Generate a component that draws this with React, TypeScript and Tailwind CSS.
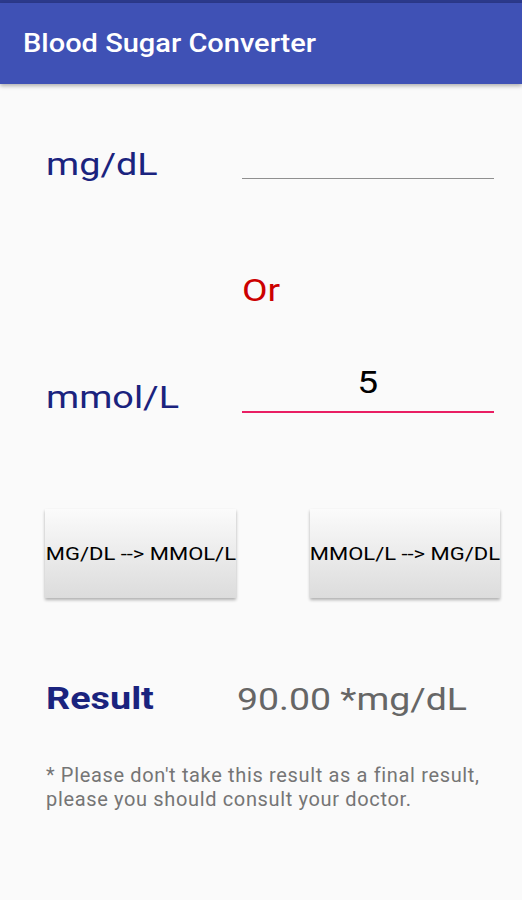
export default function App() {
  return (
    <div className="w-[522px] h-[900px] bg-[#fafafa] overflow-hidden relative" style={{ fontFamily: 'Roboto, "Liberation Sans", sans-serif' }}>
      <div className="h-[3px] bg-[#2c3a8c]" />
      <div className="h-[81px] bg-[#3f51b5] flex items-center pl-[23px] shadow-[0_2px_4px_rgba(0,0,0,0.3)] relative z-10">
        <h1 className="text-white text-[25px] font-medium inline-block origin-left scale-x-[1.16]">Blood Sugar Converter</h1>
      </div>

      <div className="pl-[46px] pr-[28px]">
        <div className="flex items-end mt-[62px] h-[38px]">
          <div className="w-[196px] pb-[2px]">
            <span className="inline-block origin-left scale-x-[1.22] text-[31px] leading-none text-[#1a237e]">mg/dL</span>
          </div>
          <div className="flex-1 border-b-[1.5px] border-[#8f8f8f] h-[30px] mb-[5px]" />
        </div>

        <div className="pl-[196px] mt-[91px]">
          <span className="inline-block origin-left scale-x-[1.2] text-[31px] leading-none text-[#cc0000]">Or</span>
        </div>

        <div className="flex items-end mt-[59px]">
          <div className="w-[196px] pb-[1px]">
            <span className="inline-block origin-left scale-x-[1.22] text-[31px] leading-none text-[#1a237e]">mmol/L</span>
          </div>
          <div className="flex-1 border-b-2 border-[#e91e63] text-center pb-[11px] mb-[3px]">
            <span className="inline-block scale-x-[1.2] text-[31px] leading-none text-black">5</span>
          </div>
        </div>

        <div className="flex justify-between mt-[93px] -mr-[6px] -ml-[1px]">
          <button className="w-[191px] h-[89px] bg-gradient-to-b from-[#fbfbfb] to-[#dcdcdc] shadow-[0_2px_3px_rgba(0,0,0,0.3)] whitespace-nowrap flex items-center justify-center">
            <span className="inline-block scale-x-[1.22] text-[18px] text-black">MG/DL --&gt; MMOL/L</span>
          </button>
          <button className="w-[190px] h-[89px] bg-gradient-to-b from-[#fbfbfb] to-[#dcdcdc] shadow-[0_2px_3px_rgba(0,0,0,0.3)] whitespace-nowrap flex items-center justify-center">
            <span className="inline-block scale-x-[1.22] text-[18px] text-black">MMOL/L --&gt; MG/DL</span>
          </button>
        </div>

        <div className="flex items-center mt-[84px]">
          <div className="w-[191px]">
            <span className="inline-block origin-left scale-x-[1.18] text-[32px] font-bold text-[#1a237e] leading-none">Result</span>
          </div>
          <span className="inline-block origin-left scale-x-[1.17] text-[32px] text-[#666] leading-none">90.00 *mg/dL</span>
        </div>

        <p className="mt-[47px] text-[20px] leading-[24px] tracking-[0.65px] text-[#757575]">
          * Please don't take this result as a final result,<br />please you should consult your doctor.
        </p>
      </div>
    </div>
  );
}
